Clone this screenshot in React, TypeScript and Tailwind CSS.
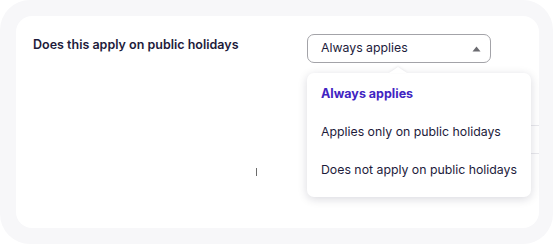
export default function App() {
  return (
    <div className="w-[555px] h-[244px] bg-white font-['Inter',sans-serif] text-[#1d1b3b]">
      <div className="w-[553px] h-[244px] rounded-[30px] bg-[#f7f7f9] pt-4 pl-4 pr-[14px] pb-4">
        <div className="h-full rounded-2xl bg-white flex">
          <div className="w-[291px] pl-[17px] pt-[21px] flex flex-col">
            <h2 className="text-[12.5px] font-semibold leading-4 whitespace-nowrap">Does this apply on public holidays</h2>
            <div className="ml-[223px] mt-[115px] w-px h-[8px] bg-[#6b6b6b]" />
          </div>

          <div className="flex-1 pt-[18px] relative">
            <button className="w-[184px] h-[29px] rounded-[7px] border border-[#a3a3a8] flex items-center justify-between pl-[13px] pr-[9px] text-[12.3px]">
              <span>Always applies</span>
              <svg width="9" height="6" viewBox="0 0 9 6" className="fill-[#6b6b70]">
                <path d="M4.5 0.5 L8.5 5.5 L0.5 5.5 Z" />
              </svg>
            </button>

            <div className="mt-[62px] border-t border-[#e8e8ec] h-[28px]" />
            <div className="border-t border-[#e8e8ec]" />

            <div className="absolute left-0 top-[57px] w-[224px] h-[124px] rounded-[7px] bg-white shadow-[0_2px_10px_rgba(20,20,50,0.16)] flex flex-col pt-[3px] text-[12.3px] whitespace-nowrap">
              <div className="absolute -top-[6px] left-[82px] w-0 h-0 border-l-[9px] border-r-[9px] border-b-[6px] border-l-transparent border-r-transparent border-b-white drop-shadow-[0_-1px_1px_rgba(20,20,50,0.08)]" />
              <div className="h-[37px] flex items-center px-[14px] text-[12.5px] font-bold text-[#4124c2]">Always applies</div>
              <div className="h-[38px] flex items-center px-[14px]">Applies only on public holidays</div>
              <div className="h-[38px] flex items-center px-[14px]">Does not apply on public holidays</div>
            </div>
          </div>
        </div>
      </div>
    </div>
  );
}
